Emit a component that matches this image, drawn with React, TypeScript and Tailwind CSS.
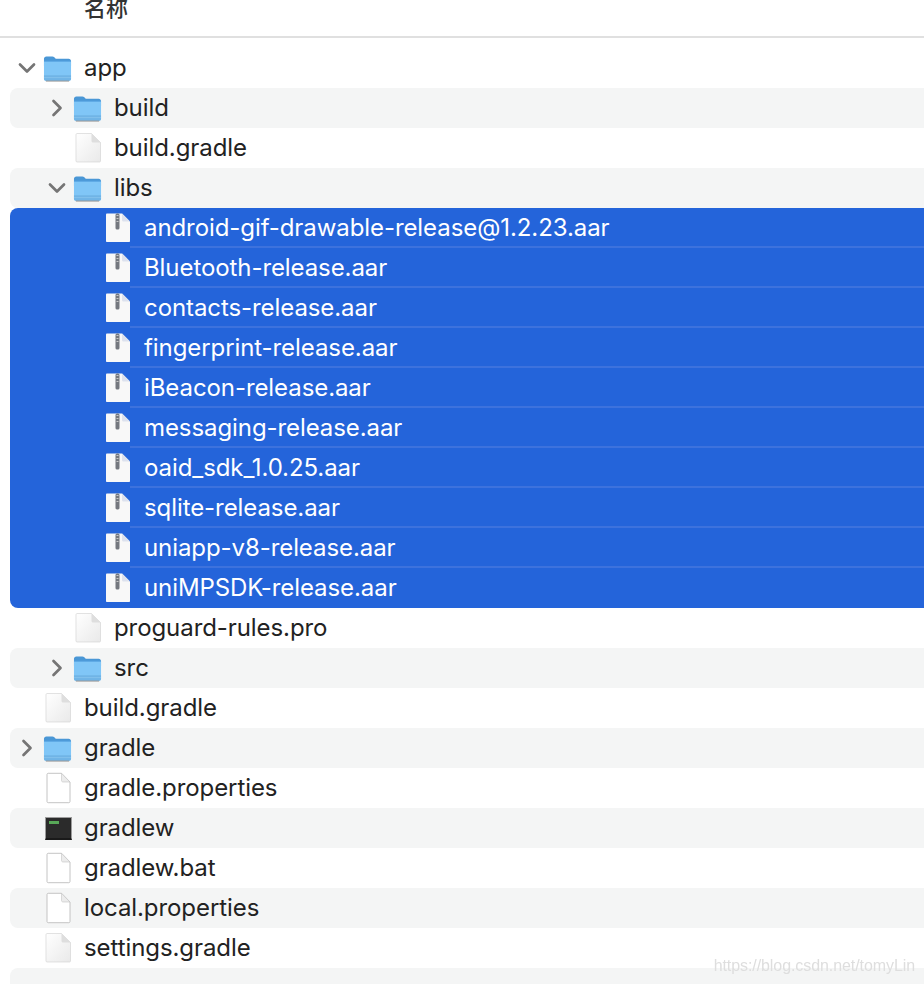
const indents = ['pl-2', 'pl-[38px]', 'pl-[68px]'];

type Kind = 'folder' | 'doc' | 'blank' | 'zip' | 'exec';
type Row = { name: string; depth: number; kind: Kind; open?: boolean; shut?: boolean };

const rows: Row[] = [
  { name: 'app', depth: 0, kind: 'folder', open: true },
  { name: 'build', depth: 1, kind: 'folder', shut: true },
  { name: 'build.gradle', depth: 1, kind: 'doc' },
  { name: 'libs', depth: 1, kind: 'folder', open: true },
  { name: 'android-gif-drawable-release@1.2.23.aar', depth: 2, kind: 'zip' },
  { name: 'Bluetooth-release.aar', depth: 2, kind: 'zip' },
  { name: 'contacts-release.aar', depth: 2, kind: 'zip' },
  { name: 'fingerprint-release.aar', depth: 2, kind: 'zip' },
  { name: 'iBeacon-release.aar', depth: 2, kind: 'zip' },
  { name: 'messaging-release.aar', depth: 2, kind: 'zip' },
  { name: 'oaid_sdk_1.0.25.aar', depth: 2, kind: 'zip' },
  { name: 'sqlite-release.aar', depth: 2, kind: 'zip' },
  { name: 'uniapp-v8-release.aar', depth: 2, kind: 'zip' },
  { name: 'uniMPSDK-release.aar', depth: 2, kind: 'zip' },
  { name: 'proguard-rules.pro', depth: 1, kind: 'doc' },
  { name: 'src', depth: 1, kind: 'folder', shut: true },
  { name: 'build.gradle', depth: 0, kind: 'doc' },
  { name: 'gradle', depth: 0, kind: 'folder', shut: true },
  { name: 'gradle.properties', depth: 0, kind: 'blank' },
  { name: 'gradlew', depth: 0, kind: 'exec' },
  { name: 'gradlew.bat', depth: 0, kind: 'blank' },
  { name: 'local.properties', depth: 0, kind: 'blank' },
  { name: 'settings.gradle', depth: 0, kind: 'doc' },
];

function FolderIcon() {
  return (
    <svg width="30" height="28" viewBox="0 0 30 28" className="-ml-px">
      <path d="M1 4.500C1 3 2 2 3.500 2h6.200c.9 0 1.400.3 2 .9L13.200 4.500H26.500C28 4.500 29 5.500 29 7v5H1z" fill="#4a97d6" />
      <path d="M1 7h28v18.200c0 1.200-.9 2-2 2H3c-1.100 0-2-.8-2-2z" fill="#80c6f7" />
      <path d="M1 6.500h28v1H1z" fill="#5aa6e2" />
      <path d="M1 21.500h28v3.700c0 1.200-.9 2-2 2H3c-1.100 0-2-.8-2-2z" fill="#70b4e6" />
      <path d="M1 23.800h28v.6H1z" fill="#92ccf2" />
      <path d="M3 27.500h24" stroke="#8f8f8f" strokeWidth="1" />
    </svg>
  );
}

function DocIcon() {
  return (
    <svg width="28" height="30" viewBox="0 0 28 30">
      <defs>
        <linearGradient id="docfill" x1="0" y1="0" x2="1" y2="1">
          <stop offset="0" stopColor="#ffffff" />
          <stop offset="1" stopColor="#e9e9e9" />
        </linearGradient>
      </defs>
      <path d="M2 1.500C2 1 2.500.5 3 .5h14.500L26.500 9.500v18.500c0 .6-.5 1-1 1H3c-.5 0-1-.4-1-1z" fill="url(#docfill)" stroke="#d6d6d6" strokeWidth="0.7" />
      <path d="M17.500.5v7.500c0 .9.6 1.500 1.500 1.500h7.500z" fill="#dedede" />
    </svg>
  );
}

function BlankIcon() {
  return (
    <svg width="28" height="32" viewBox="0 0 28 32">
      <path d="M3 2.500C3 1.800 3.500 1.300 4.200 1.300h13.300L26 10v19.500c0 .7-.5 1.200-1.200 1.200H4.200c-.7 0-1.200-.5-1.200-1.200z" fill="#ffffff" stroke="#bdbdbd" strokeWidth="0.9" />
      <path d="M17.500 1.300v7.200c0 .9.6 1.500 1.500 1.500h7z" fill="#ececec" stroke="#c4c4c4" strokeWidth="0.6" />
    </svg>
  );
}

function ZipIcon() {
  return (
    <svg width="28" height="30" viewBox="0 0 28 30">
      <path d="M2 1.500C2 .9 2.500.4 3 .4h15L26 8.500V28c0 .6-.5 1-1 1H3c-.5 0-1-.4-1-1z" fill="#f8f8f8" />
      <path d="M18 .4V7c0 .9.6 1.500 1.500 1.500H26z" fill="#dde2ee" />
      <rect x="11.500" y="0.400" width="4" height="16" rx="1.500" fill="#74777e" />
      <path d="M12.500 2.500h2M12.500 5.500h2M12.500 8.500h2" stroke="#c9c9c9" strokeWidth="1" />
    </svg>
  );
}

function ExecIcon() {
  return (
    <div className="h-[23px] w-[27px] border border-[#9c9c9c] border-b-2 border-b-[#1a1a1a] bg-[#2b2b2b] pl-[3px] pt-[3px]">
      <div className="h-[3px] w-[10px] bg-[#58a858]" />
    </div>
  );
}

function Chevron({ open }: { open?: boolean }) {
  return (
    <svg width="18" height="18" viewBox="0 0 18 18" fill="none" stroke="#757575" strokeWidth="2.700" strokeLinecap="round" strokeLinejoin="round">
      {open ? <path d="M2 5.500l7 7 7-7" /> : <path d="M5.500 2l7 7-7 7" />}
    </svg>
  );
}

function RowIcon({ kind }: { kind: Kind }) {
  if (kind === 'folder') return <FolderIcon />;
  if (kind === 'doc') return <DocIcon />;
  if (kind === 'blank') return <BlankIcon />;
  if (kind === 'zip') return <ZipIcon />;
  return <ExecIcon />;
}

export default function App() {
  return (
    <div className="relative h-[984px] w-[924px] overflow-hidden bg-white font-['Inter','Noto_Sans_CJK_SC',sans-serif] text-[24px] tracking-[-0.08px] text-[#222222]">
      <div className="flex h-[38px] items-start overflow-hidden border-b-2 border-[#e0e0e0] pl-[84px]">
        <span className="-mt-[6px] text-[22px] font-medium leading-[28px] text-[#333333]">名称</span>
      </div>
      <div className="mt-[10px] pl-[10px]">
        {rows.map((row, i) => {
          const selected = row.kind === 'zip';
          const first = selected && rows[i - 1].kind !== 'zip';
          const last = selected && rows[i + 1].kind !== 'zip';
          return (
            <div
              key={i}
              className={`relative flex h-10 items-center ${indents[row.depth]} ${
                selected ? 'bg-[#2464da] text-white' : i % 2 === 1 ? 'rounded-l-lg bg-[#f4f5f5]' : ''
              } ${first ? 'rounded-tl-lg' : ''} ${last ? 'rounded-bl-lg' : ''}`}
            >
              <div className="flex w-[26px] justify-start">
                {(row.open || row.shut) && <Chevron open={row.open} />}
              </div>
              <div className="mr-3 flex w-[28px] justify-center">
                <RowIcon kind={row.kind} />
              </div>
              <span className="whitespace-nowrap">{row.name}</span>
              {selected && !last && (
                <div className="absolute bottom-0 left-[120px] right-0 h-[2px] bg-[#3d72dd]" />
              )}
            </div>
          );
        })}
        <div className="h-10 rounded-l-lg bg-[#f4f5f5]" />
      </div>
      <span className="absolute bottom-[6px] right-[9px] font-['Liberation_Sans',sans-serif] text-[16px] text-[#dedede] blur-[0.6px]">
        https://blog.csdn.net/tomyLin
      </span>
    </div>
  );
}
